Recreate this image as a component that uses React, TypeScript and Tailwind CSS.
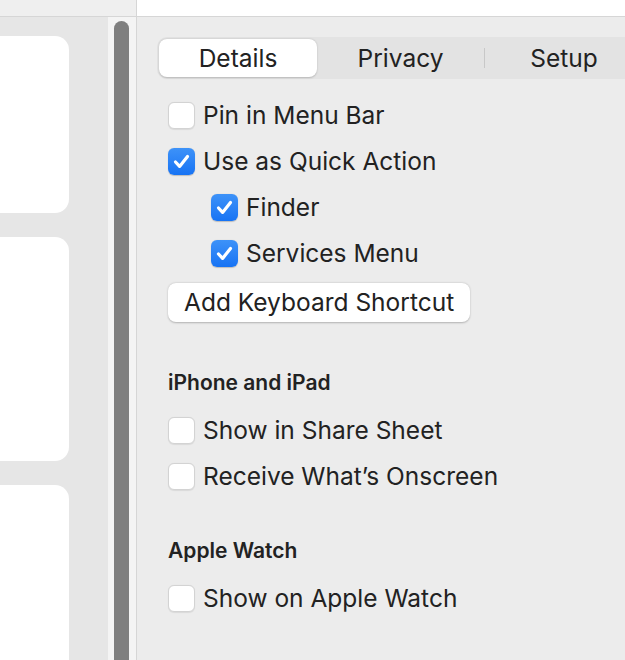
import React from "react";

function Box({ checked }: { checked?: boolean }) {
  if (checked) {
    return (
      <div className="w-[27px] h-[27px] shrink-0 rounded-[6px] bg-gradient-to-b from-[#3d92f8] to-[#1673f4] flex items-center justify-center shadow-[0_0.5px_1px_rgba(0,0,0,0.2)]">
        <svg width="19" height="19" viewBox="0 0 19 19">
          <path d="M3.5 10 L7.6 14.4 L15.5 4.4" fill="none" stroke="white" strokeWidth="3.2" strokeLinecap="round" strokeLinejoin="round" />
        </svg>
      </div>
    );
  }
  return (
    <div className="w-[27px] h-[27px] shrink-0 rounded-[6px] bg-white border border-[#d3d3d3] shadow-[0_0.5px_1px_rgba(0,0,0,0.08)]" />
  );
}

function Row({ label, checked, indent }: { label: string; checked?: boolean; indent?: boolean }) {
  return (
    <div className={`h-[46px] flex items-center gap-[8px] ${indent ? "pl-[43px]" : ""}`}>
      <Box checked={checked} />
      <span className="text-[24.5px] text-[#222222] leading-none">{label}</span>
    </div>
  );
}

export default function App() {
  return (
    <div className="w-[625px] h-[660px] flex flex-col overflow-hidden font-['Inter',sans-serif]">
      <div className="flex h-[17px] shrink-0 border-b border-[#d6d6d6]">
        <div className="w-[137px] bg-[#efefef] border-r border-[#d6d6d6]" />
        <div className="flex-1 bg-white" />
      </div>
      <div className="flex flex-1 min-h-0">
        <div className="w-[108px] bg-[#e6e6e6] flex flex-col gap-[24px] pt-[19px] overflow-hidden">
          <div className="ml-[-30px] w-[99px] h-[177px] shrink-0 rounded-[14px] bg-white" />
          <div className="ml-[-30px] w-[99px] h-[224px] shrink-0 rounded-[14px] bg-white" />
          <div className="ml-[-30px] w-[99px] h-[224px] shrink-0 rounded-[14px] bg-white" />
        </div>
        <div className="w-[28px] bg-[#f4f4f4] pl-[6px] pt-[4px]">
          <div className="w-[15px] h-full rounded-t-full bg-[#7f7f7f]" />
        </div>
        <div className="w-px bg-[#d6d6d6]" />
        <div className="flex-1 bg-[#ececec] flex flex-col overflow-hidden">
          <div className="ml-[20px] mt-[20px] h-[42px] w-[500px] shrink-0 bg-[#e3e3e3] rounded-l-[10px] p-[2px] flex items-center">
            <div className="w-[158px] h-full rounded-[8px] bg-white shadow-[0_0.5px_2px_rgba(0,0,0,0.2)] flex items-center justify-center text-[24.5px] text-[#222222]">
              Details
            </div>
            <div className="w-[167px] h-full flex items-center justify-center text-[24.5px] text-[#222222]">
              Privacy
            </div>
            <div className="w-px h-[20px] bg-[#c8c8c8]" />
            <div className="w-[158px] h-full flex items-center justify-center text-[24.5px] text-[#222222]">
              Setup
            </div>
          </div>
          <div className="pl-[31px] mt-[13px] flex flex-col">
            <Row label="Pin in Menu Bar" />
            <Row label="Use as Quick Action" checked />
            <Row label="Finder" checked indent />
            <Row label="Services Menu" checked indent />
            <div className="mt-[7px] w-[302px] h-[39px] rounded-[8px] bg-white shadow-[0_0.5px_2px_rgba(0,0,0,0.25)] flex items-center pl-[16px] text-[24.5px] text-[#222222]">
              Add Keyboard Shortcut
            </div>
            <div className="mt-[49px] h-[24px] flex items-center text-[21px] font-semibold text-[#222222]">
              iPhone and iPad
            </div>
            <div className="mt-[12px]">
              <Row label="Show in Share Sheet" />
              <Row label="Receive What’s Onscreen" />
            </div>
            <div className="mt-[40px] h-[24px] flex items-center text-[21px] font-semibold text-[#222222]">
              Apple Watch
            </div>
            <div className="mt-[12px]">
              <Row label="Show on Apple Watch" />
            </div>
          </div>
        </div>
      </div>
    </div>
  );
}
